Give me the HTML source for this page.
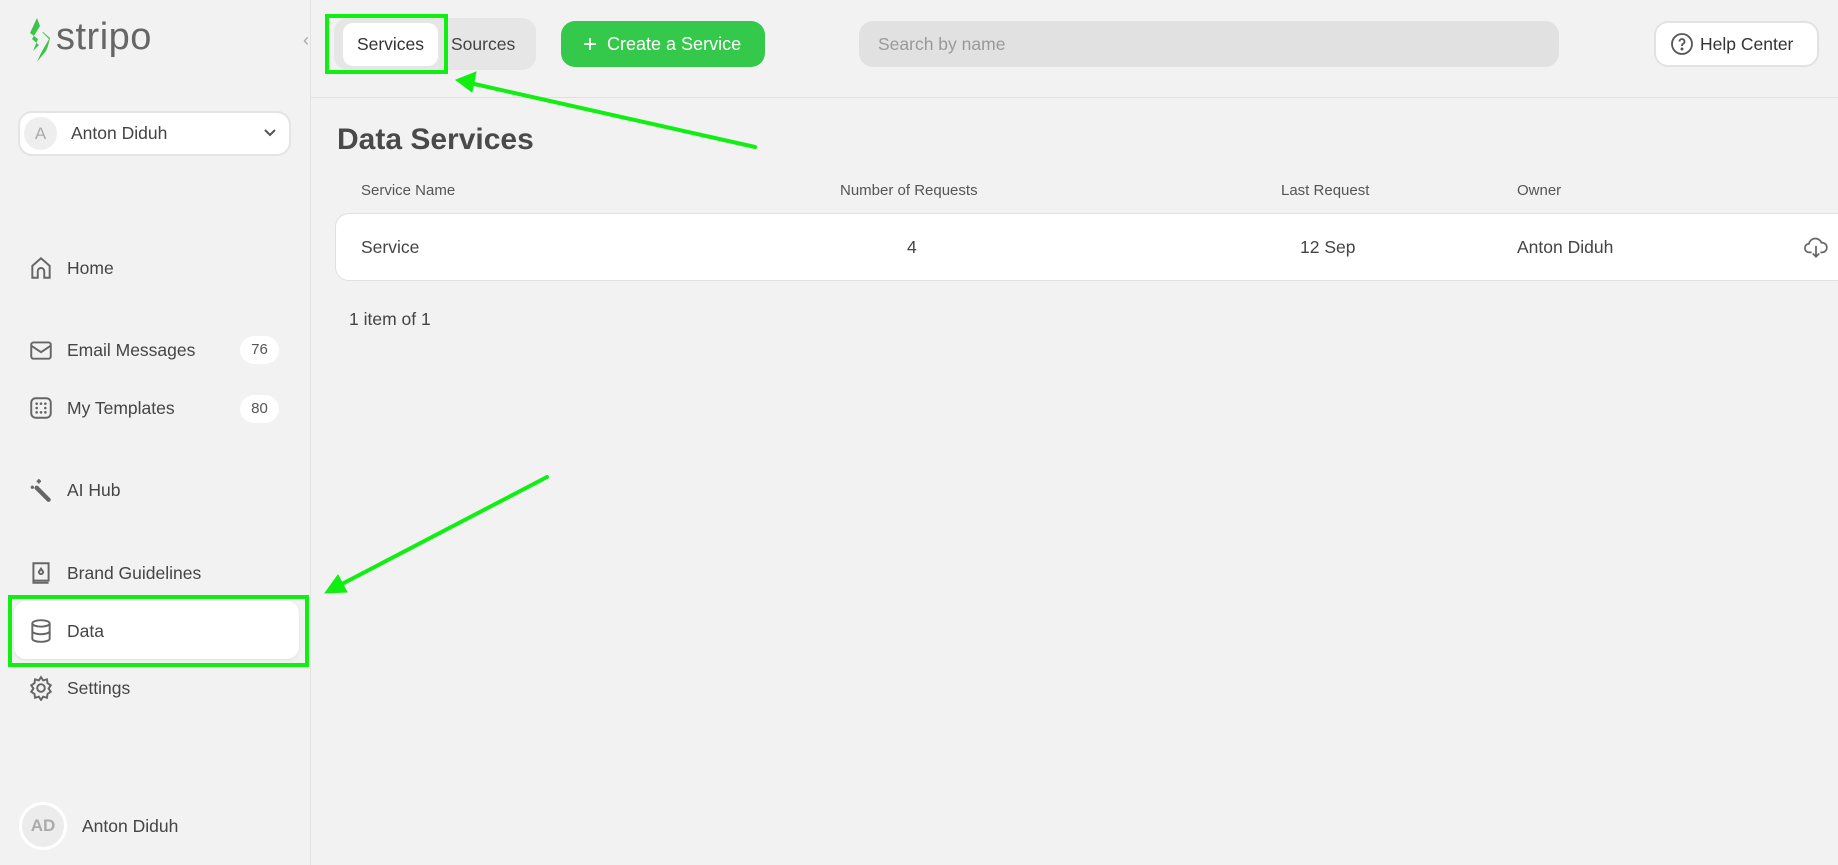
<!DOCTYPE html>
<html><head><meta charset="utf-8"><style>
*{box-sizing:border-box;margin:0;padding:0}
body{width:1838px;height:865px;background:#f2f2f2;font-family:"Liberation Sans",sans-serif;color:#444;position:relative;overflow:hidden}
.abs{position:absolute}
.side{left:0;top:0;width:311px;height:865px;border-right:1px solid #e2e2e2}
.nav{position:absolute;left:28px;display:flex;align-items:center;font-size:17.5px;color:#454545}
.nav svg{width:26px;height:26px;margin-right:13px}
.badge{position:absolute;left:240px;width:39px;height:28px;border-radius:14px;background:#fff;font-size:15px;color:#555;text-align:center;line-height:28px}
.hdr{font-size:15px;color:#555;top:182px}
.cell{font-size:17.5px;color:#444;top:237px}
</style></head><body>
<div class="abs side"></div>
<!-- logo -->
<svg class="abs" style="left:28px;top:18px" width="24" height="44" viewBox="0 0 24 44"><path d="M9 0 L2 15 L10 21 L5 33 L11 27 L4 21 L12 8 Z" fill="#3cc44a"/><path d="M14 14 L21 21 L13 35 L9 44 L18 33 L20 28 L22 20 L15 14 Z" fill="#3cc44a"/></svg>
<div class="abs" style="left:56px;top:16px;font-size:38px;color:#666;letter-spacing:0.5px">stripo</div>
<div class="abs" style="left:303px;top:30px;font-size:18px;color:#aaa">‹</div>
<!-- account -->
<div class="abs" style="left:18px;top:111px;width:273px;height:45px;border-radius:14px;background:#fff;border:2px solid #e4e4e4"></div>
<div class="abs" style="left:24px;top:117px;width:33px;height:33px;border-radius:50%;background:#eee;color:#aaa;font-size:17px;text-align:center;line-height:33px">A</div>
<div class="abs" style="left:71px;top:123px;font-size:17.5px;color:#444">Anton Diduh</div>
<svg class="abs" style="left:263px;top:128px" width="14" height="10" viewBox="0 0 14 10"><path d="M2 2l5 5 5-5" stroke="#555" stroke-width="2" fill="none"/></svg>
<!-- nav -->
<div class="nav" style="top:255px"><svg viewBox="0 0 24 24" fill="none" stroke="#666" stroke-width="1.8"><path d="M4 21V10l8-7 8 7v11h-5v-6a3 3 0 0 0-6 0v6z"/></svg>Home</div>
<div class="nav" style="top:337px"><svg viewBox="0 0 24 24" fill="none" stroke="#666" stroke-width="1.8"><rect x="3" y="5" width="18" height="15" rx="2"/><path d="M3 8l9 6 9-6"/></svg>Email Messages</div>
<div class="badge" style="top:336px">76</div>
<div class="nav" style="top:395px"><svg viewBox="0 0 24 24" fill="none" stroke="#666" stroke-width="1.8"><rect x="3" y="3" width="18" height="18" rx="4"/><path d="M8 8h.01M12 8h.01M16 8h.01M8 12h.01M16 12h.01M8 16h.01M12 16h.01M16 16h.01" stroke-width="2.4" stroke-linecap="round"/></svg>My Templates</div>
<div class="badge" style="top:395px">80</div>
<div class="nav" style="top:477px"><svg viewBox="0 0 24 24" fill="none" stroke="#666" stroke-width="1.8"><path d="M8 10l11 11" stroke-width="4" stroke-linecap="round"/><path d="M10 2v4M8 4h4M4 8v3M2.5 9.5h3"/></svg>AI Hub</div>
<div class="nav" style="top:560px"><svg viewBox="0 0 24 24" fill="none" stroke="#666" stroke-width="1.8"><path d="M5 3h14v16H5zM5 19v2h14"/><path d="M12 8l-2 3a2 2 0 0 0 4 0z"/></svg>Brand Guidelines</div>
<div class="abs" style="left:14px;top:601px;width:285px;height:58px;border-radius:12px;background:#fff;box-shadow:0 1px 3px rgba(0,0,0,.08)"></div>
<div class="abs" style="left:8px;top:595px;width:301px;height:72px;border:4px solid #11ee11"></div>
<div class="nav" style="top:618px"><svg viewBox="0 0 24 24" fill="none" stroke="#666" stroke-width="1.8"><ellipse cx="12" cy="5" rx="8" ry="3"/><path d="M4 5v14c0 1.7 3.6 3 8 3s8-1.3 8-3V5M4 12c0 1.7 3.6 3 8 3s8-1.3 8-3"/></svg>Data</div>
<div class="nav" style="top:675px"><svg viewBox="0 0 24 24" fill="none" stroke="#666" stroke-width="1.8"><circle cx="12" cy="12" r="3.5"/><path d="M12 2l2 3 3.5-1 .5 3.5 3 2-2 3 2 3-3 2-.5 3.5-3.5-1-2 3-2-3-3.5 1-.5-3.5-3-2 2-3-2-3 3-2 .5-3.5 3.5 1z"/></svg>Settings</div>
<div class="abs" style="left:19px;top:802px;width:48px;height:48px;border-radius:50%;background:#ececec;border:3px solid #fff;color:#aaa;font-weight:bold;font-size:17px;text-align:center;line-height:42px">AD</div>
<div class="abs" style="left:82px;top:816px;font-size:17.5px;color:#444">Anton Diduh</div>
<!-- top bar -->
<div class="abs" style="left:311px;top:97px;width:1527px;height:1px;background:#e0e0e0"></div>
<div class="abs" style="left:334px;top:18px;width:202px;height:52px;border-radius:14px;background:#e6e6e6"></div>
<div class="abs" style="left:343px;top:23px;width:95px;height:43px;border-radius:10px;background:#fff;font-size:17.5px;color:#333;text-align:center;line-height:43px">Services</div>
<div class="abs" style="left:451px;top:34px;font-size:17.5px;color:#444">Sources</div>
<div class="abs" style="left:325px;top:14px;width:123px;height:60px;border:4px solid #11ee11"></div>
<div class="abs" style="left:561px;top:21px;width:204px;height:46px;border-radius:14px;background:#34c94a;color:#fff;font-size:18px;line-height:46px;padding-left:22px"><span style="font-size:24px;vertical-align:-2px;margin-right:10px">+</span>Create a Service</div>
<div class="abs" style="left:859px;top:21px;width:700px;height:46px;border-radius:14px;background:#e1e1e1;color:#999;font-size:17.5px;line-height:46px;padding-left:19px">Search by name</div>
<div class="abs" style="left:1654px;top:21px;width:165px;height:46px;border-radius:14px;background:#fff;border:2px solid #e2e2e2;font-size:17.5px;color:#333;line-height:42px;padding-left:44px">Help Center</div>
<svg class="abs" style="left:1670px;top:32px" width="24" height="24" viewBox="0 0 24 24" fill="none" stroke="#555" stroke-width="1.8"><circle cx="12" cy="12" r="10"/><path d="M9.5 9.5a2.5 2.5 0 1 1 3.5 2.3c-.7.4-1 1-1 1.7v.5"/><circle cx="12" cy="17" r=".6" fill="#555"/></svg>
<!-- content -->
<div class="abs" style="left:337px;top:123px;font-size:30px;color:#4a4a4a;font-weight:bold">Data Services</div>
<div class="abs hdr" style="left:361px">Service Name</div>
<div class="abs hdr" style="left:840px">Number of Requests</div>
<div class="abs hdr" style="left:1281px">Last Request</div>
<div class="abs hdr" style="left:1517px">Owner</div>
<div class="abs" style="left:335px;top:213px;width:1520px;height:68px;border-radius:14px;background:#fff;border:1px solid #e0e0e0"></div>
<div class="abs cell" style="left:361px">Service</div>
<div class="abs cell" style="left:907px">4</div>
<div class="abs cell" style="left:1300px">12 Sep</div>
<div class="abs cell" style="left:1517px">Anton Diduh</div>
<svg class="abs" style="left:1803px;top:234px" width="26" height="26" viewBox="0 0 24 24" fill="none" stroke="#666" stroke-width="1.6"><path d="M8 17H6a4 4 0 0 1-.5-8A6 6 0 0 1 17 8a4.5 4.5 0 0 1 1 9h-2M12 11v10M9 18l3 3 3-3"/></svg>
<div class="abs" style="left:349px;top:309px;font-size:17.5px;color:#444">1 item of 1</div>
<!-- arrows -->
<svg class="abs" style="left:0;top:0" width="1838" height="865"><g stroke="#11ee11" stroke-width="4" fill="#11ee11" stroke-linecap="round"><line x1="755" y1="147" x2="470" y2="83"/><polygon points="456,80 476,72 472,92" stroke-width="1"/><line x1="547" y1="477" x2="340" y2="585"/><polygon points="325,593 338,575 347,592" stroke-width="1"/></g></svg>
</body></html>
